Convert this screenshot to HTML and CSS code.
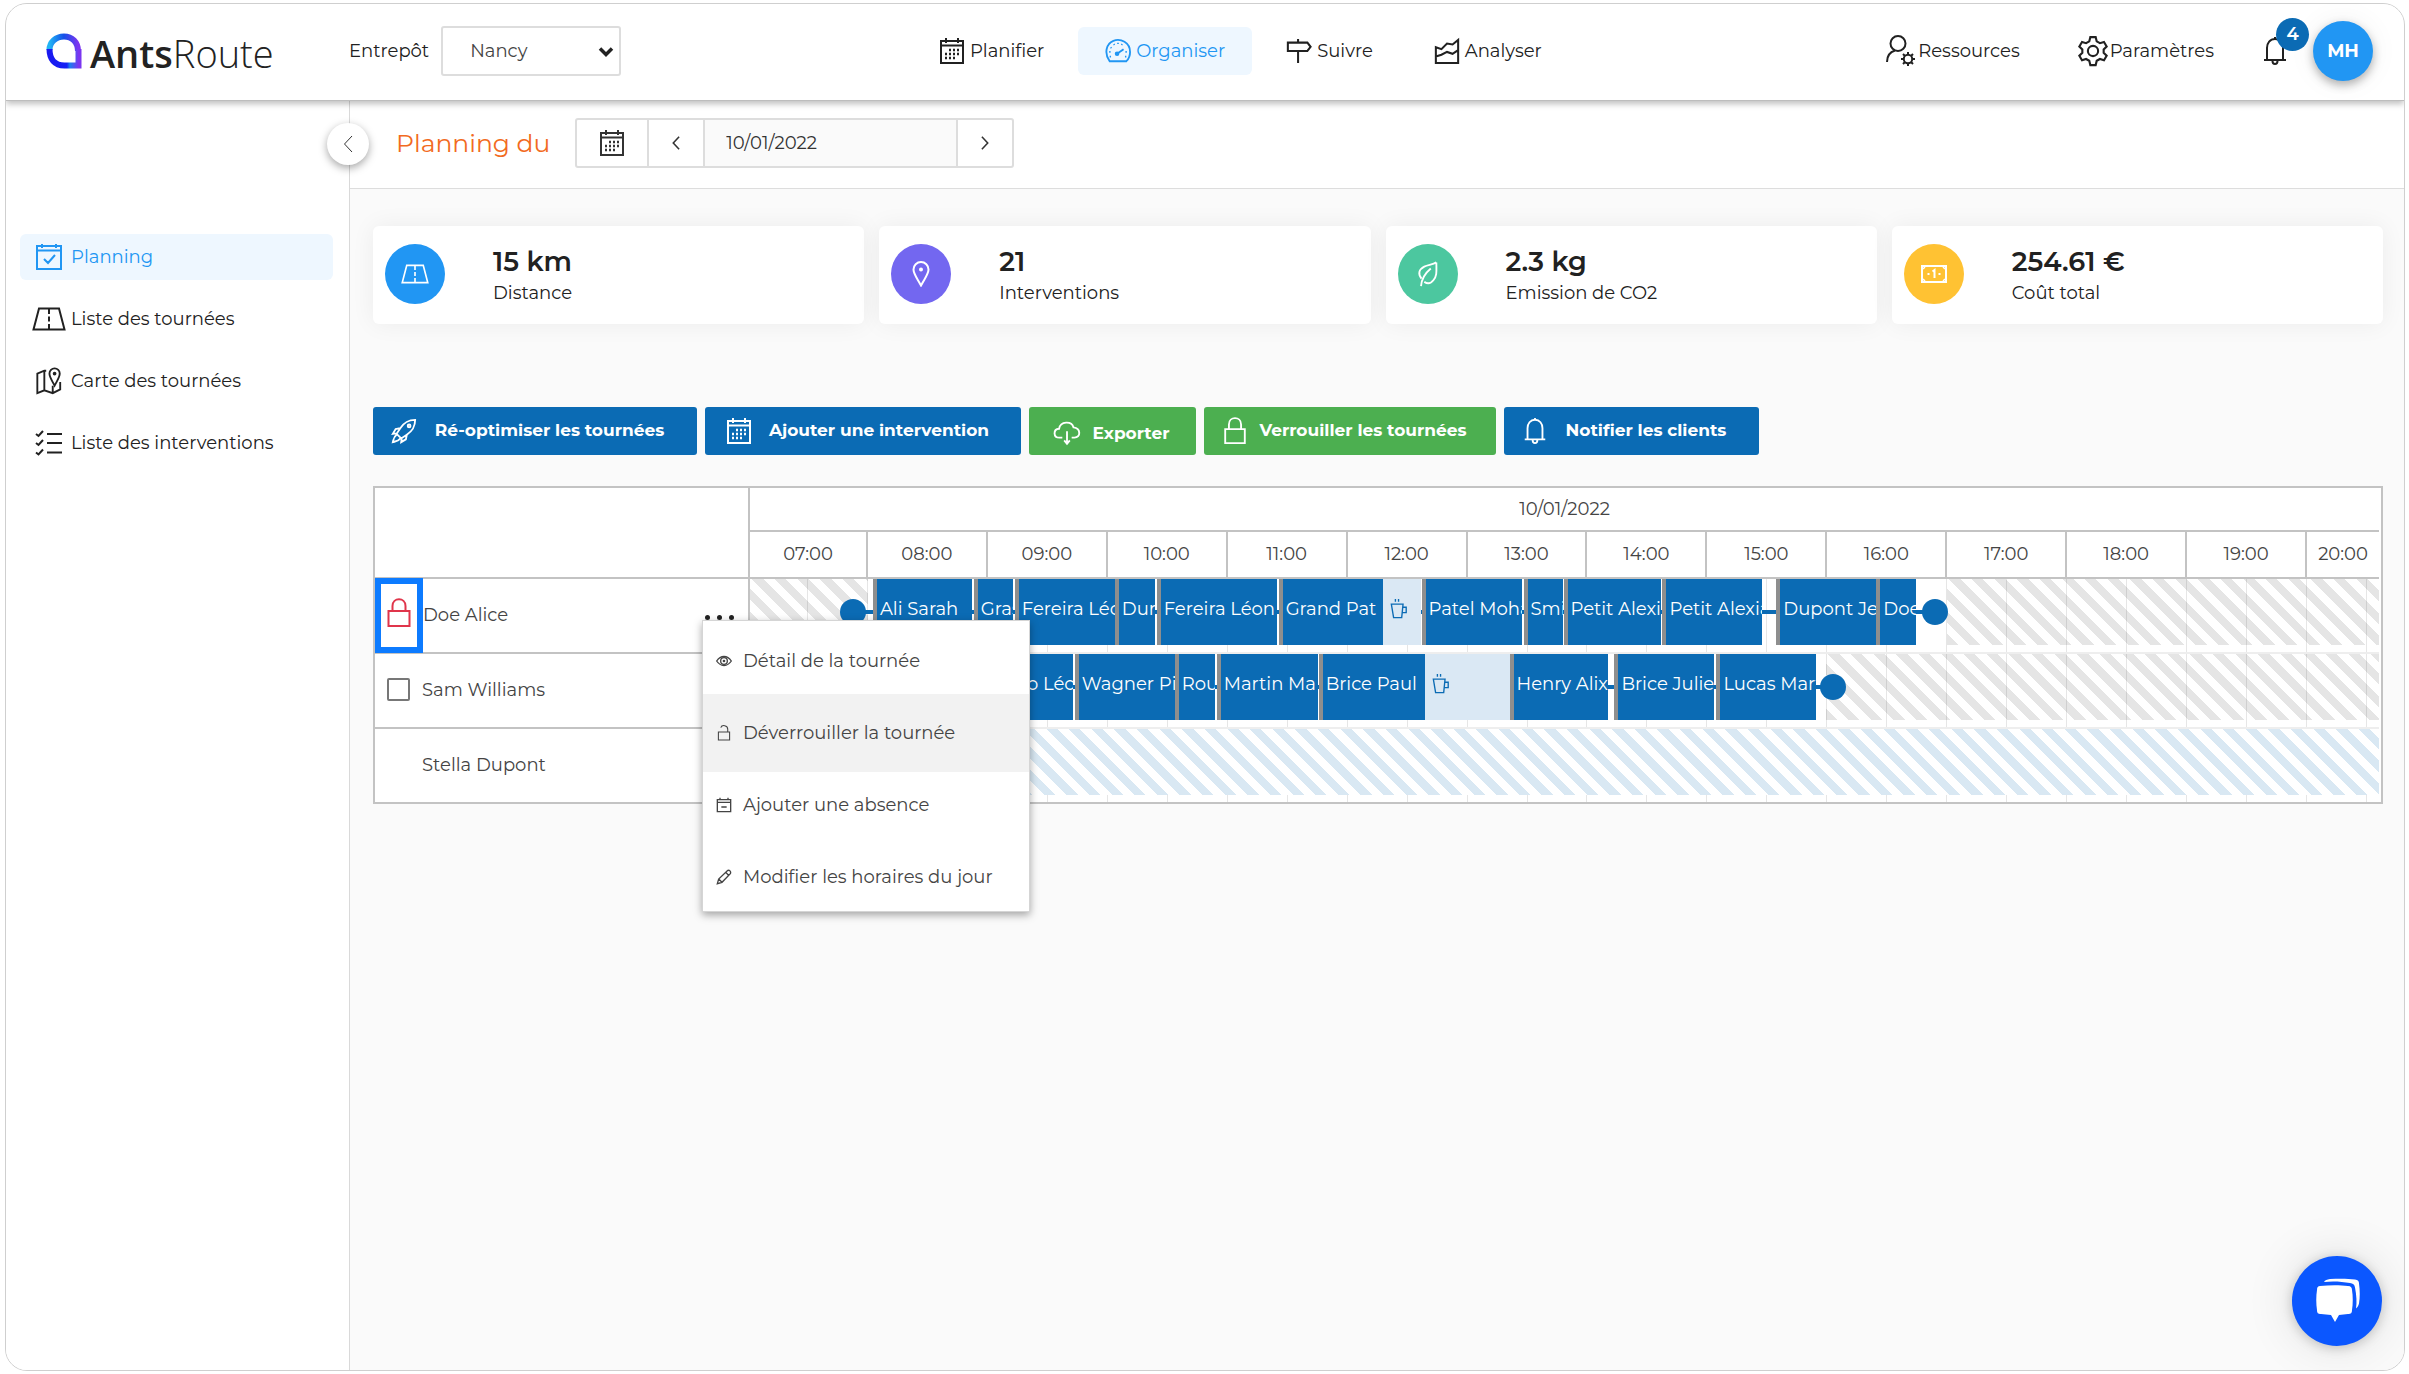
FILE: index.html
```html
<!DOCTYPE html>
<html lang="fr">
<head>
<meta charset="utf-8">
<meta name="viewport" content="width=device-width, initial-scale=1">
<title>AntsRoute - Planning</title>
<link rel="stylesheet" href="styles.css">
</head>
<body>
<svg class="sprite" aria-hidden="true">
  <defs>
    <linearGradient id="logoA" x1="0" y1="0" x2="1" y2="0"><stop offset="0" stop-color="#22b4f5"/><stop offset=".5" stop-color="#1450e8"/><stop offset="1" stop-color="#7b35f0"/></linearGradient>
    <linearGradient id="logoB" x1="0" y1="0" x2="1" y2="0"><stop offset="0" stop-color="#1a1af0"/><stop offset=".6" stop-color="#1420f5"/><stop offset=".7" stop-color="#1a7df0"/><stop offset="1" stop-color="#7b35f0"/></linearGradient>
  </defs>
  <symbol id="calendar" viewBox="0 0 26 28"><path d="M2 4h22v22H2zM2 8.500h22M7 1v5M19 1v5"/><path d="M10 13h2m2 0h2m2 0h2M6 17h2m2 0h2m2 0h2m2 0h2M6 21h2m2 0h2m2 0h2" stroke-width="2.400"/></symbol>
  <symbol id="calendar-check" viewBox="0 0 26 28"><path d="M1 3h24v23H1zM1 7.500h24M6 1v4M20 1v4M8 16l4 4 7-8"/></symbol>
  <symbol id="gauge" viewBox="0 0 28 26"><path d="M5 24C-1 16 1 5 9 2c8-3 18 2 18 12 0 4-1 7-4 10zM13 16l7-5"/><circle cx="13" cy="16" r="1.500" fill="currentColor"/><path d="M4.500 14h1.500M6 9l1 .8M9.500 5.500l.7 1M14 4v1.500M18.500 5.500l-.7 1M22 14h1.500M5 19h1.500M21.500 19H23" stroke-width="1.800"/></symbol>
  <symbol id="sign" viewBox="0 0 28 28"><path d="M2 5h21l3.500 4.500L23 14H2zM13 1v4M13 14v13" stroke-width="2.200"/></symbol>
  <symbol id="chart" viewBox="0 0 28 28"><path d="M2 27V10l6 2 6-6 6 1 6-5v25zM2 20l6-2 6-3 6 2 6-4" stroke-width="2.200"/></symbol>
  <symbol id="user-gear" viewBox="0 0 30 32"><circle cx="12" cy="8.500" r="7.500"/><path d="M1 27c0-6 3-10 8-11.500"/><circle cx="22" cy="24" r="4.200"/><path d="M22 17v3M22 28v3M15 24h3M26 24h3M17 19l2 2M25 27l2 2M27 19l-2 2M19 27l-2 2"/></symbol>
  <symbol id="gear" viewBox="0 0 28 30"><path d="M11.500 2h5l1 4 3 1.700L24.300 6.500l2.500 4.300L24 13.500v3.200l2.800 2.700-2.500 4.300-3.800-1.200-3 1.700-1 4h-5l-1-4-3-1.700-3.800 1.200-2.500-4.300L4 16.700v-3.200L1.200 10.800l2.500-4.300 3.800 1.200 3-1.700z"/><circle cx="14" cy="15" r="4.800"/></symbol>
  <symbol id="bell" viewBox="0 0 24 30"><path d="M1 24h22M4 24V12c0-5 3-9 8-9s8 4 8 9v12M12 1v2M9.500 25c0 4 5 4 5 0"/></symbol>
  <symbol id="road" viewBox="0 0 34 24"><path d="M7 1.500h20l5.500 21h-31zM17 2v5M17 9.500v5M17 17v5"/></symbol>
  <symbol id="map" viewBox="0 0 28 30"><path d="M11 4L9 4 1.500 7v21l7.500-3 9 3 8-4v-8M9 4v21M18 20v8"/><path d="M20 20c-3-6-5.500-9-5.500-13a5.500 5.500 0 0 1 11 0c0 4-2.500 7-5.500 13z"/><circle cx="20" cy="7" r="1"/></symbol>
  <symbol id="checklist" viewBox="0 0 28 26"><path d="M12 4h15M12 13h15M12 22.500h15M1 4l2.500 2L8 1M1 13l2.500 2L8 10M1 22.500l2.500 2 4.500-5"/></symbol>
  <symbol id="pin" viewBox="0 0 18 26"><path d="M9 24.500C5 17 1.500 13 1.500 8.500a7.500 7.500 0 0 1 15 0C16.500 13 13 17 9 24.500z"/><circle cx="9" cy="8.500" r="1"/></symbol>
  <symbol id="leaf" viewBox="0 0 24 28"><path d="M21 1.500c0 9 1 14-3 19-3 4-7 4-10 2M5 19C1 14 2 9 8 6c4-2 9-2 13-4.500M15 8C9 13 5 19 4.500 27"/></symbol>
  <symbol id="money" viewBox="0 0 28 20"><path d="M2 2h24v16H2z"/><path d="M12.500 7.500l2-1.500v8" /><path d="M7.500 10h2M18.500 10h2"/><path d="M3 5l2-2M25 5l-2-2M3 15l2 2M25 15l-2 2" stroke-width="1.500"/></symbol>
  <symbol id="rocket" viewBox="0 0 28 28"><path d="M26 2c-8 0-12 3-16 9l-4 6 5 5 6-4c6-4 9-8 9-16zM10 11l-5 1-3 5 4-.5M17 18l-1 5-5 3 .5-4M6 18c-3 2-3 4-4 8 4-1 6-1 8-4"/><circle cx="19.500" cy="8.500" r="1.500"/></symbol>
  <symbol id="cloud" viewBox="0 0 30 26"><path d="M10 18H7c-7 0-7-9-.5-9.500C8 0 20 0 22 7c8 1 8 11 1 11h-3M15 11v13M12 21l3 3.500 3-3.500"/></symbol>
  <symbol id="lock" viewBox="0 0 24 30"><path d="M1.500 13h21v15h-21zM5.500 13V8c0-9 13-9 13 0v5"/></symbol>
  <symbol id="unlock" viewBox="0 0 24 30"><path d="M1.500 13h21v15h-21zM19 13V8c0-8-11-9-13-3"/></symbol>
  <symbol id="eye" viewBox="0 0 24 16"><path d="M1 8c6-9 16-9 22 0-6 9-16 9-22 0z"/><circle cx="12" cy="8" r="5"/><circle cx="12" cy="8" r="1"/></symbol>
  <symbol id="cal-minus" viewBox="0 0 24 24"><path d="M2 4h20v18H2zM2 8h20M6 1v4M18 1v4M8 15h8"/></symbol>
  <symbol id="pencil" viewBox="0 0 24 24"><path d="M2 22l2-7L17 2.500c3-2 6 1.500 4.500 4.500L9 20zM14.500 5l5 5M4 15l5 5"/></symbol>
  <symbol id="cup" viewBox="0 0 20 22"><path d="M1.500 5.500h13L13 20.500H4zM14 9h4v6h-4M6 0v3M9.500 0v3"/></symbol>
  <symbol id="left" viewBox="0 0 10 18"><path d="M9 1L1.500 9 9 17"/></symbol>
  <symbol id="right" viewBox="0 0 10 18"><path d="M1 1l7.500 8L1 17"/></symbol>
  <symbol id="down" viewBox="0 0 16 12"><path d="M2 2.500l6 6 6-6" stroke-width="3.500"/></symbol>
</svg>

<div class="app">
  <header class="topbar">
    <a class="logo" href="#">
      <svg class="logo-mark" viewBox="0 0 36 36"><path d="M32 18C32 9 26 3.500 18 3.500S3.500 9 3.500 17" fill="none" stroke="url(#logoA)" stroke-width="6"/><path d="M3.500 16c0 10 5 16.500 15 16.500h14V16" fill="none" stroke="url(#logoB)" stroke-width="6"/></svg>
      <span class="logo-text"><b>Ants</b>Route</span>
    </a>
    <div class="depot">
      <label for="depot">Entrepôt</label>
      <span class="select-wrap">
        <select id="depot"><option>Nancy</option></select>
        <svg class="icon select-arrow"><use href="#down"/></svg>
      </span>
    </div>
    <nav class="main-nav">
      <a href="#"><svg class="icon i26"><use href="#calendar"/></svg>Planifier</a>
      <a href="#" class="active"><svg class="icon i26"><use href="#gauge"/></svg>Organiser</a>
      <a href="#"><svg class="icon i26"><use href="#sign"/></svg>Suivre</a>
      <a href="#"><svg class="icon i26"><use href="#chart"/></svg>Analyser</a>
    </nav>
    <nav class="user-nav">
      <a href="#"><svg class="icon i30"><use href="#user-gear"/></svg>Ressources</a>
      <a href="#"><svg class="icon i30"><use href="#gear"/></svg>Paramètres</a>
      <button class="bell" aria-label="Notifications"><svg class="icon i28"><use href="#bell"/></svg><span class="badge">4</span></button>
      <button class="avatar">MH</button>
    </nav>
  </header>

  <div class="body">
    <aside class="sidebar">
      <button class="collapse" aria-label="Replier"><svg class="icon"><use href="#left"/></svg></button>
      <nav class="side-nav">
        <a href="#" class="active"><svg class="icon"><use href="#calendar-check"/></svg>Planning</a>
        <a href="#"><svg class="icon wide"><use href="#road"/></svg>Liste des tournées</a>
        <a href="#"><svg class="icon"><use href="#map"/></svg>Carte des tournées</a>
        <a href="#"><svg class="icon"><use href="#checklist"/></svg>Liste des interventions</a>
      </nav>
    </aside>

    <main class="main">
      <div class="subheader">
        <h1>Planning du</h1>
        <div class="date-group">
          <button class="cal" aria-label="Calendrier"><svg class="icon i26"><use href="#calendar"/></svg></button>
          <button aria-label="Jour précédent"><svg class="icon arrow"><use href="#left"/></svg></button>
          <input type="text" value="10/01/2022" aria-label="Date">
          <button aria-label="Jour suivant"><svg class="icon arrow"><use href="#right"/></svg></button>
        </div>
      </div>

      <div class="content">
        <section class="stats">
          <div class="stat"><span class="disc blue"><svg class="icon"><use href="#road"/></svg></span><div><strong>15 km</strong><span>Distance</span></div></div>
          <div class="stat"><span class="disc violet"><svg class="icon"><use href="#pin"/></svg></span><div><strong>21</strong><span>Interventions</span></div></div>
          <div class="stat"><span class="disc green"><svg class="icon"><use href="#leaf"/></svg></span><div><strong>2.3 kg</strong><span>Emission de CO2</span></div></div>
          <div class="stat"><span class="disc yellow"><svg class="icon"><use href="#money"/></svg></span><div><strong>254.61 €</strong><span>Coût total</span></div></div>
        </section>

        <div class="actions">
          <button class="w-optimise"><svg class="icon i26"><use href="#rocket"/></svg><span>Ré-optimiser les tournées</span></button>
          <button class="w-add"><svg class="icon i26"><use href="#calendar"/></svg><span>Ajouter une intervention</span></button>
          <button class="go w-export"><svg class="icon i28"><use href="#cloud"/></svg><span>Exporter</span></button>
          <button class="go w-lock"><svg class="icon i26"><use href="#lock"/></svg><span>Verrouiller les tournées</span></button>
          <button class="w-notify"><svg class="icon i26"><use href="#bell"/></svg><span>Notifier les clients</span></button>
        </div>

        <table class="gantt">
          <colgroup><col class="col-name"><col></colgroup>
          <thead>
            <tr>
              <th aria-label="Livreur"></th>
              <th>
                <div class="day">10/01/2022</div>
                <div class="hours"><span>07:00</span><span>08:00</span><span>09:00</span><span>10:00</span><span>11:00</span><span>12:00</span><span>13:00</span><span>14:00</span><span>15:00</span><span>16:00</span><span>17:00</span><span>18:00</span><span>19:00</span><span>20:00</span></div>
              </th>
            </tr>
          </thead>
          <tbody>
            <tr>
              <td>
                <div class="driver">
                  <button class="lock-box" aria-label="Tournée verrouillée"><svg class="icon"><use href="#lock"/></svg></button>
                  <span>Doe Alice</span>
                  <button class="more" aria-label="Actions"><i></i><i></i><i></i></button>
                  <ul class="menu">
                    <li><button><svg class="icon"><use href="#eye"/></svg>Détail de la tournée</button></li>
                    <li><button class="hover"><svg class="icon"><use href="#unlock"/></svg>Déverrouiller la tournée</button></li>
                    <li><button><svg class="icon"><use href="#cal-minus"/></svg>Ajouter une absence</button></li>
                    <li><button><svg class="icon"><use href="#pencil"/></svg>Modifier les horaires du jour</button></li>
                  </ul>
                </div>
              </td>
              <td>
                <div class="track">
                  <div class="off" style="--s:0;--w:118"></div>
                  <div class="off" style="--s:1198;--w:432"></div>
                  <div class="link" style="--s:103;--w:1082"></div>
                  <div class="stop" style="--s:103"></div>
                  <div class="job" style="--s:123;--w:99">Ali Sarah</div>
                  <div class="job" style="--s:224;--w:39">Gras</div>
                  <div class="job" style="--s:265;--w:100">Fereira Léo</div>
                  <div class="job" style="--s:365;--w:40">Dura</div>
                  <div class="job" style="--s:407;--w:120">Fereira Léon</div>
                  <div class="job" style="--s:529;--w:104">Grand Pat</div>
                  <div class="pause" style="--s:633;--w:38"><svg class="icon"><use href="#cup"/></svg></div>
                  <div class="job" style="--s:672;--w:100">Patel Moha</div>
                  <div class="job" style="--s:774;--w:40">Smi</div>
                  <div class="job" style="--s:814;--w:98">Petit Alexia</div>
                  <div class="job" style="--s:913;--w:100">Petit Alexia</div>
                  <div class="job" style="--s:1027;--w:100">Dupont Je</div>
                  <div class="job" style="--s:1127;--w:40">Doe</div>
                  <div class="stop" style="--s:1186"></div>
                </div>
              </td>
            </tr>
            <tr>
              <td><div class="driver"><input type="checkbox" id="sam"><label for="sam">Sam Williams</label></div></td>
              <td>
                <div class="track">
                  <div class="off" style="--s:1077;--w:553"></div>
                  <div class="link" style="--s:230;--w:854"></div>
                  <div class="job" style="--s:225;--w:98">Bruno Léo</div>
                  <div class="job" style="--s:325;--w:100">Wagner Pi</div>
                  <div class="job" style="--s:425;--w:40">Rou</div>
                  <div class="job" style="--s:467;--w:101">Martin Ma</div>
                  <div class="job" style="--s:569;--w:106">Brice Paul</div>
                  <div class="pause" style="--s:675;--w:85"><svg class="icon"><use href="#cup"/></svg></div>
                  <div class="job" style="--s:760;--w:99">Henry Alix</div>
                  <div class="job" style="--s:865;--w:100">Brice Juliet</div>
                  <div class="job" style="--s:967;--w:100">Lucas Mart</div>
                  <div class="stop" style="--s:1084"></div>
                </div>
              </td>
            </tr>
            <tr>
              <td><div class="driver"><span class="indent">Stella Dupont</span></div></td>
              <td><div class="track"><div class="free" style="--s:0;--w:1630"></div></div></td>
            </tr>
          </tbody>
        </table>
      </div>
    </main>
  </div>

  <button class="chat" aria-label="Discussion">
    <svg viewBox="0 0 46 46"><path d="M6 8c10-1 20-1 28 0 3 0 4 2 4 4 1 6 1 14 0 20 0 3-1 4-4 4l-9 1-4 7-4-7-10-1c-3 0-4-1-4-4-1-6-1-14 0-20 0-3 1-4 3-4z" fill="#fff"/><path d="M10 4c1-2 3-2.500 6-3 9-.5 18-.5 25 .5 3 .5 4 1.500 4 4 1 7 1 14 0 20-.5 2-1 3-3 5 1-6 .5-13-1-21-.5-3-2-4-5-4.500C28 3.500 18 3 10 4z" fill="#fff"/></svg>
  </button>
</div>
</body>
</html>
```
FILE: styles.css
```css
* { box-sizing: border-box; }
body {
  margin: 0;
  padding: 3px 4px 2px 5px;
  background: #fff;
  color: #212121;
  font: 400 18px/24px Montserrat, Inter, sans-serif;
}
button, input, select { font: inherit; color: inherit; margin: 0; }
button { background: none; border: 0; padding: 0; cursor: pointer; }
a { color: inherit; text-decoration: none; }
.sprite { position: absolute; width: 0; height: 0; }
.icon {
  flex: none;
  fill: none;
  stroke: currentColor;
  stroke-width: 2;
}
.i26 { width: 26px; height: 28px; }
.i28 { width: 28px; height: 30px; }
.i30 { width: 30px; height: 32px; }

.app {
  position: relative;
  display: flex;
  flex-direction: column;
  min-height: calc(100vh - 6px);
  border: 1px solid #cfcfcf;
  border-radius: 22px;
  overflow: hidden;
}

/* Top bar */
.topbar {
  position: relative;
  z-index: 2;
  display: grid;
  grid-template-columns: 343px 7fr auto 10fr;
  align-items: center;
  height: 97px;
  padding: 0 31px 3px 0;
  background: #fff;
  border-bottom: 1px solid #bdbdbd;
  box-shadow: 0 3px 6px rgba(0, 0, 0, .25);
}
.logo { display: flex; align-items: center; gap: 8px; padding-left: 40px; }
.logo-mark { width: 36px; height: 36px; }
.logo-text { font: 300 38px/48px "Open Sans", sans-serif; color: #222; padding-top: 4px; }
.logo-text b { font-weight: 600; }
.depot { display: flex; align-items: center; gap: 12px; }
.select-wrap { position: relative; }
.select-wrap select {
  appearance: none;
  width: 180px;
  height: 50px;
  padding: 0 27px;
  background: #fff;
  border: 2px solid #ddd;
  border-radius: 3px;
  color: #444;
}
.select-arrow { position: absolute; right: 7px; top: 20px; width: 16px; height: 12px; pointer-events: none; color: #222; }
.main-nav, .user-nav { display: flex; align-items: center; }
.main-nav a { display: flex; align-items: center; gap: 5px; height: 48px; padding: 0 27px; border-radius: 6px; }
.main-nav { gap: 7px; }
.main-nav .active, .side-nav .active { background: #eef7ff; color: #2196f3; }
.user-nav { justify-content: flex-end; }
.user-nav a { display: flex; align-items: center; gap: 2px; margin-right: 58px; }
.user-nav a + a { margin-right: 47px; }
.bell { position: relative; display: flex; margin-right: 24px; }
.badge {
  position: absolute;
  left: 15px;
  top: -18px;
  width: 33px;
  height: 33px;
  border-radius: 50%;
  background: #0b6bb4;
  color: #fff;
  font-weight: 600;
  line-height: 33px;
}
.avatar {
  width: 60px;
  height: 60px;
  border-radius: 50%;
  background: #2196f3;
  color: #fff;
  font-weight: 700;
  box-shadow: 0 4px 10px rgba(0, 0, 0, .3), 0 0 30px rgba(0, 0, 0, .06);
}

/* Side bar */
.body { display: flex; flex: 1; }
.sidebar { position: relative; z-index: 1; flex: none; width: 344px; border-right: 1px solid #d9d9d9; background: #fff; }
.collapse {
  position: absolute;
  right: -20px;
  top: 22px;
  width: 42px;
  height: 42px;
  border-radius: 50%;
  background: #fff;
  color: #333;
  box-shadow: 0 3px 8px rgba(0, 0, 0, .35);
}
.collapse .icon { width: 10px; height: 18px; display: block; margin: auto; stroke-width: 1; }
.side-nav { display: flex; flex-direction: column; gap: 16px; padding: 133px 16px 0 14px; }
.side-nav a { display: flex; align-items: center; height: 46px; gap: 8px; padding-left: 15px; border-radius: 6px; }
.side-nav .icon { width: 28px; height: 28px; }
.side-nav .wide { width: 34px; margin: 0 -3px; }

/* Page header */
.main { flex: 1; min-width: 0; display: flex; flex-direction: column; }
.subheader {
  display: flex;
  align-items: center;
  gap: 25px;
  height: 88px;
  padding: 0 46px 3px;
  background: #fff;
  border-bottom: 1px solid #ddd;
}
h1 { margin: 0; font-size: 25px; line-height: 36px; font-weight: 400; color: #f26a21; }
.date-group { display: flex; height: 50px; border: 2px solid #ddd; border-radius: 3px; color: #333; }
.date-group button { display: flex; align-items: center; justify-content: center; width: 54px; }
.date-group .cal { width: 72px; border-right: 2px solid #ddd; }
.date-group input {
  width: 255px;
  padding: 0 21px;
  background: #fafafa;
  border: solid #ddd;
  border-width: 0 2px;
}
.arrow { width: 8px; height: 14px; }

/* Figures */
.content { flex: 1; padding: 37px 21px 40px 23px; background: #fafafa; }
.stats { display: grid; grid-template-columns: repeat(4, 1fr); gap: 15px; }
.stat {
  display: flex;
  align-items: center;
  gap: 48px;
  height: 98px;
  padding: 0 0 2px 12px;
  background: #fff;
  border-radius: 6px;
  box-shadow: 0 0 24px rgba(0, 0, 0, .06);
}
.stat strong { display: block; font-size: 27px; line-height: 38px; font-weight: 600; }
.disc { display: grid; place-items: center; width: 60px; height: 60px; border-radius: 50%; color: #fff; }
.disc .icon { width: 28px; height: 26px; }
.blue { background: #2196f3; }
.violet { background: #7367f0; }
.green { background: #4cc79f; }
.yellow { background: #ffc233; }

/* Actions */
.actions { display: flex; gap: 8px; margin-top: 83px; }
.actions button {
  display: flex;
  align-items: center;
  height: 48px;
  padding: 0 18px;
  border-radius: 3px;
  background: #0b6bb4;
  color: #fff;
  font-size: 17px;
  font-weight: 700;
}
.actions span { flex: 1; text-align: center; padding: 0 0 3px 3px; }
.actions .go { background: #4caf50; }
.actions .w-optimise { width: 324px; }
.actions .w-add { width: 316px; padding-left: 21px; }
.actions .w-export { width: 167px; padding: 0 24px; }
.w-export span { padding: 3px 0 0 9px; }
.w-export .icon { position: relative; top: 2px; }
.actions .w-lock { width: 292px; }
.w-lock span { padding-left: 0; }
.actions .w-notify { width: 255px; }

/* Planning board */
.gantt {
  width: 100%;
  margin-top: 31px;
  table-layout: fixed;
  border-spacing: 0;
  background: #fff;
  border: 2px solid #c3c3c3;
  color: #444;
}
.col-name { width: 375px; }
.gantt th, .gantt td { padding: 0; font-weight: 400; }
.gantt th:first-child, .gantt td:first-child { border-right: 2px solid #c3c3c3; border-bottom: 2px solid #c3c3c3; }
.gantt tr:last-child td:first-child { border-bottom-width: 0; }
.gantt thead th:first-child { border-bottom-width: 2px; }
.gantt th:last-child, .gantt td:last-child { padding-right: 2px; }
.day { height: 44px; line-height: 43px; border-bottom: 2px solid #c3c3c3; }
.hours { display: grid; grid-template-columns: 118fr repeat(12, 120fr) 72fr; border-bottom: 2px solid #c3c3c3; }
.hours span { height: 45px; line-height: 44px; border-right: 2px solid #c3c3c3; white-space: nowrap; text-align: center; }
.hours span:last-child { border-right: 0; }
.driver { position: relative; display: flex; align-items: center; height: 73px; padding-bottom: 2px; }
.lock-box { width: 48px; height: 75px; flex: none; margin: 0 0 -2px; border: 6px solid #0d7bff; background: #fff; color: #e0354b; }
.lock-box .icon { width: 24px; height: 30px; display: block; margin: -6px auto 0; }
.driver input {
  appearance: none;
  width: 23px;
  height: 23px;
  margin: 0 12px;
  border: 2px solid #777;
  border-radius: 2px;
  background: #fff;
}
.indent { padding-left: 47px; }
.more { display: flex; gap: 7px; margin: 6px 14px 0 auto; color: #222; }
.more i { width: 5px; height: 5px; border-radius: 50%; background: currentColor; }
.menu {
  position: absolute;
  z-index: 5;
  left: 327px;
  top: 41px;
  width: 328px;
  margin: 0;
  padding: 4px 0 0;
  list-style: none;
  background: #fff;
  border: 1px solid #d5d5d5;
  box-shadow: 0 3px 8px rgba(0, 0, 0, .35);
}
.menu button { display: flex; align-items: center; gap: 11px; width: 100%; height: 72px; padding-left: 13px; white-space: nowrap; }
.menu li:last-child { height: 70px; }
.menu .hover { background: #f2f2f2; box-shadow: 0 -3px #f2f2f2, 0 3px #f2f2f2; }
.menu .icon { width: 16px; height: 16px; }

/* The board spans 1630 units: two to a minute */
.track {
  position: relative;
  height: 75px;
  border-bottom: 2px solid #eee;
  overflow: hidden;
  background: repeating-linear-gradient(to right, transparent 0 calc(100% * 59 / 1630), #e6e6e6 calc(100% * 59 / 1630) calc(100% * 60 / 1630));
  background-position: -2px 0;
}
.gantt tr:last-child .track { height: 73px; border-bottom-width: 0; }
.track > div { position: absolute; top: 0; left: calc(var(--s) / 1630 * 100%); width: calc(var(--w) / 1630 * 100%); height: 66px; }
.off { background: repeating-linear-gradient(45deg, rgba(0, 0, 0, .1) 0 8px, transparent 8px 16px); }
.free { background: repeating-linear-gradient(45deg, #d9e8f3 0 8px, #fff 8px 16px); }
.job {
  padding-left: 3px;
  background: #0b6bb4;
  border-left: 4px solid #8e8e8e;
  color: #fff;
  line-height: 60px;
  white-space: nowrap;
  overflow: hidden;
}
.pause { background: #dae8f4; color: #0b6bb4; padding: 19px 7px; }
.pause .icon { display: block; width: 18px; height: 22px; stroke-width: 1.5; }
.track > .link { top: 31px; height: 4px; background: #0b6bb4; }
.track > .stop { top: 20px; width: 26px; height: 26px; margin-left: -13px; border-radius: 50%; background: #0b6bb4; }

.chat {
  position: absolute;
  right: 22px;
  bottom: 24px;
  z-index: 3;
  display: grid;
  place-items: center;
  width: 90px;
  height: 90px;
  border-radius: 50%;
  background: #0b57ff;
  box-shadow: 0 2px 12px rgba(0, 0, 0, .2), 0 0 50px rgba(0, 0, 0, .12);
}
.chat svg { width: 46px; height: 46px; }
```
